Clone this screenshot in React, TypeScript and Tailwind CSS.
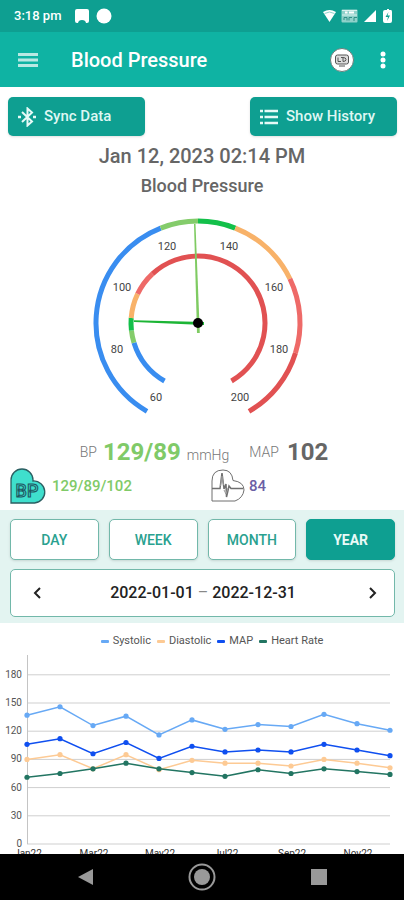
import type { ReactNode } from "react";

type Segment = { from: number; to: number; color: string };

const CENTER = 110;
const OUTER_RADIUS = 102;
const INNER_RADIUS = 67;

const outerSegments: Segment[] = [
  { from: 60, to: 120, color: "#398df0" },
  { from: 120, to: 130, color: "#84cc6b" },
  { from: 130, to: 140, color: "#13c04a" },
  { from: 140, to: 160, color: "#f8b269" },
  { from: 160, to: 180, color: "#ee6a68" },
  { from: 180, to: 200, color: "#e15152" },
];

const innerSegments: Segment[] = [
  { from: 60, to: 80, color: "#398df0" },
  { from: 80, to: 85, color: "#84cc6b" },
  { from: 85, to: 90, color: "#13c04a" },
  { from: 90, to: 100, color: "#f8b269" },
  { from: 100, to: 110, color: "#ee6a68" },
  { from: 110, to: 200, color: "#e15152" },
];

const gaugeLabels = [
  { value: 60, x: 68, y: 188 },
  { value: 80, x: 29, y: 140 },
  { value: 100, x: 34, y: 78 },
  { value: 120, x: 79, y: 37 },
  { value: 140, x: 141, y: 37 },
  { value: 160, x: 186, y: 78 },
  { value: 180, x: 191, y: 140 },
  { value: 200, x: 152, y: 188 },
];

function gaugePoint(value: number, radius: number) {
  const angle = ((value - 130) * (300 / 140) * Math.PI) / 180;
  return {
    x: CENTER + radius * Math.sin(angle),
    y: CENTER - radius * Math.cos(angle),
  };
}

function arcPath({ from, to }: Segment, radius: number) {
  const a = gaugePoint(from, radius);
  const b = gaugePoint(to, radius);
  const large = (to - from) * (300 / 140) > 180 ? 1 : 0;
  return `M${a.x} ${a.y}A${radius} ${radius} 0 ${large} 1 ${b.x} ${b.y}`;
}

function Gauge() {
  return (
    <svg
      viewBox="0 0 220 210"
      className="mr-2 h-[210px] w-[220px]"
      role="img"
      aria-label="Blood pressure gauge, 129 over 89"
    >
      {outerSegments.map((s) => (
        <path key={s.from} d={arcPath(s, OUTER_RADIUS)} fill="none" stroke={s.color} strokeWidth="5" />
      ))}
      {innerSegments.map((s) => (
        <path key={s.from} d={arcPath(s, INNER_RADIUS)} fill="none" stroke={s.color} strokeWidth="5" />
      ))}
      {gaugeLabels.map((l) => (
        <text key={l.value} x={l.x} y={l.y} textAnchor="middle" className="fill-[#444] text-[11px]">
          {l.value}
        </text>
      ))}
      <path d="M106 11H107.500L111.800 120H109Z" fill="#7fcb62" />
      <path d="M46 107.200L116 109V112L46 109Z" fill="#1cb535" />
      <circle cx={CENTER} cy={CENTER} r="5" fill="#000" />
    </svg>
  );
}

const series = [
  { name: "Systolic", color: "#67a9f5", values: [137, 146, 126, 136, 116, 132, 122, 127, 125, 138, 128, 121] },
  { name: "Diastolic", color: "#fdca94", values: [90, 95, 80, 95, 79, 89, 86, 86, 83, 90, 86, 81] },
  { name: "MAP", color: "#0f4ff0", values: [106, 112, 96, 108, 91, 104, 98, 100, 98, 106, 100, 94] },
  { name: "Heart Rate", color: "#227562", values: [71, 75, 80, 86, 80, 76, 72, 79, 75, 80, 77, 74] },
];

const months = ["Jan22", "Mar22", "May22", "Jul22", "Sep22", "Nov22"];
const ticks = [0, 30, 60, 90, 120, 150, 180];
const chartX = (i: number) => 27 + i * 33;
const chartY = (v: number) => 194 - v * 0.94;

function TrendChart() {
  return (
    <svg viewBox="0 0 404 220" className="w-full shrink-0" role="img" aria-label="Readings by month">
      {ticks.map((t) => (
        <g key={t}>
          <line x1="27" x2="390" y1={chartY(t)} y2={chartY(t)} stroke="#cfcfcf" />
          <text x="22" y={chartY(t) + 3} textAnchor="end" className="fill-[#555] text-[10px]">
            {t}
          </text>
        </g>
      ))}
      <line x1="27.500" x2="27.500" y1="5" y2="194" stroke="#c4c4c4" />
      {series.map((s) => (
        <g key={s.name} fill={s.color}>
          <polyline
            points={s.values.map((v, i) => `${chartX(i)},${chartY(v)}`).join(" ")}
            fill="none"
            stroke={s.color}
            strokeWidth="1.500"
          />
          {s.values.map((v, i) => (
            <circle key={i} cx={chartX(i)} cy={chartY(v)} r="2.600" />
          ))}
        </g>
      ))}
      {months.map((m, i) => (
        <text key={m} x={chartX(i * 2) + 1} y="207" textAnchor="middle" className="fill-[#333] text-[10px]">
          {m}
        </text>
      ))}
    </svg>
  );
}

function StatusBar() {
  return (
    <div className="flex h-8 shrink-0 items-center bg-[#0e9f91] pr-3 pl-[14px] text-white">
      <span className="text-[13px] font-medium">3:18 pm</span>
      <svg viewBox="0 0 38 16" className="ml-[14px] h-4 w-[38px]" fill="currentColor" aria-hidden="true">
        <path d="M2 1H12Q14 1 14 3V13Q14 15 12 15H11Q10.500 12 7 12Q3.500 12 3 15H2Q0 15 0 13V3Q0 1 2 1Z" />
        <circle cx="29" cy="8" r="7.500" />
      </svg>
      <svg viewBox="0 0 70 16" className="ml-auto h-4 w-[70px]" aria-hidden="true">
        <path d="M1 4Q7.500 0 14 4L7.500 14Z" fill="#fff" />
        <path d="M2.500 5.500Q7.500 2.500 12.500 5.500" fill="none" stroke="#8fd4cc" />
        <rect x="19.500" y="1.500" width="16" height="13" rx="1" fill="#8fd1ca" />
        <path d="M20 2.500H35M20 7H35" stroke="#d8f1ee" />
        <path d="M23 4.500H25.500M27 4.500H32" stroke="#fff" strokeWidth="2" />
        <path d="M22 12V9.500H25V12.500M27 12.500V9.500H30M32 13V9.500H35" fill="none" stroke="#318f86" />
        <path d="M54 2V14H42Z" fill="#fff" />
        <path d="M63 2H65V1H67V2H69Q70 2 70 4V13Q70 15 68 15H63Q61 15 61 13V4Q61 2 63 2Z" fill="#fff" />
        <path d="M66.500 4L63.500 9H66L65 13L68 7.500H65.500Z" fill="#0e9f91" />
      </svg>
    </div>
  );
}

function AppBar() {
  return (
    <header className="flex h-[55px] shrink-0 items-center bg-[#0fb3a3] px-[18px] text-white">
      <button type="button" aria-label="Menu">
        <svg viewBox="0 0 20 16" className="h-4 w-5" stroke="#b9e9e3" strokeWidth="3" aria-hidden="true">
          <path d="M0 2.500H20M0 8H20M0 13.500H20" />
        </svg>
      </button>
      <h1 className="ml-[33px] text-xl font-medium">Blood Pressure</h1>
      <button type="button" aria-label="Remove ads" className="ml-auto">
        <svg viewBox="0 0 24 24" className="size-6" aria-hidden="true">
          <circle cx="12" cy="12" r="11.500" fill="#fff" stroke="#6b7c79" />
          <rect x="5.500" y="7" width="13" height="9" rx="2" fill="#ddd" stroke="#555" />
          <path d="M8 9.500V13.500H11M11 9.500H13V13.500M13 9.500Q16 9.500 16 11.500T13 13.500M9 18H15" fill="none" stroke="#555" />
        </svg>
      </button>
      <button type="button" aria-label="More options" className="ml-[26px]">
        <svg viewBox="0 0 6 18" className="h-[18px] w-[6px]" fill="currentColor" aria-hidden="true">
          <circle cx="3" cy="3" r="2.500" />
          <circle cx="3" cy="9" r="2.500" />
          <circle cx="3" cy="15" r="2.500" />
        </svg>
      </button>
    </header>
  );
}

function ActionButton({ icon, label, className }: { icon: ReactNode; label: string; className: string }) {
  return (
    <button
      type="button"
      className={`flex h-[39px] items-center gap-2 rounded-[5px] bg-[#0e9f91] pl-[10px] text-[15px] font-medium text-[#dff7f3] shadow-sm ${className}`}
    >
      {icon}
      {label}
    </button>
  );
}

function HeartBp() {
  return (
    <svg viewBox="0 0 36 36" className="size-9" aria-hidden="true">
      <path
        d="M1 35V12A11 11 0 0 1 23 12V13A11 11 0 0 1 24.500 35Z"
        fill="#3fdfcd"
        stroke="#2b5f62"
        strokeWidth="1.300"
      />
      <text x="17" y="29" textAnchor="middle" className="fill-[#35c9bd] text-[18px] font-medium" stroke="#215560">
        BP
      </text>
    </svg>
  );
}

function HeartPulse() {
  return (
    <svg viewBox="0 0 34 34" className="h-[34px] w-[34px]" fill="none" stroke="#6f6f6f" aria-hidden="true">
      <path d="M1 32V12Q1 1 12 1Q21 1 22 11.500Q33 13 33 21Q32 29 24 32Z" />
      <path d="M1 19.500H9L11 4L13 20L15 15L15.500 28L18 17L20 19.500H32" strokeWidth="1.500" />
      <path d="M9.500 17L11 7L12.500 16M13 21L15 25L17 19" stroke="#999" />
    </svg>
  );
}

const periods = ["DAY", "WEEK", "MONTH", "YEAR"];

function PeriodPanel() {
  return (
    <section className="flex flex-col gap-[9px] bg-[#e3f4f1] pt-[9px] pr-[9px] pb-[6px] pl-[10px]">
      <div className="grid grid-cols-4 gap-[10px]">
        {periods.map((p) => (
          <button
            key={p}
            type="button"
            aria-pressed={p === "YEAR"}
            className={`h-[41px] rounded-[5px] border text-sm shadow-sm ${
              p === "YEAR"
                ? "border-[#0e9f91] bg-[#0e9f91] font-bold text-[#e8faf7]"
                : "border-[#72b8aa] bg-white font-medium text-[#2aa18f]"
            }`}
          >
            {p}
          </button>
        ))}
      </div>
      <div className="flex h-12 items-center justify-between rounded-[5px] border border-[#72b8aa] bg-white pr-[17px] pl-[22px]">
        <button type="button" aria-label="Previous year">
          <svg viewBox="0 0 8 12" className="h-3 w-2" fill="none" stroke="#222" strokeWidth="2" aria-hidden="true">
            <path d="M7 1L2 6L7 11" />
          </svg>
        </button>
        <span className="pr-1 text-base font-medium text-[#222]">
          2022-01-01 <span className="font-normal text-[#888]">–</span> 2022-12-31
        </span>
        <button type="button" aria-label="Next year">
          <svg viewBox="0 0 8 12" className="h-3 w-2" fill="none" stroke="#222" strokeWidth="2" aria-hidden="true">
            <path d="M1 1L6 6L1 11" />
          </svg>
        </button>
      </div>
    </section>
  );
}

function NavigationBar() {
  return (
    <nav className="flex h-[46px] shrink-0 items-center justify-center gap-[95px] bg-black">
      <button type="button" aria-label="Back">
        <svg viewBox="0 0 15 18" className="h-[18px] w-[15px]" fill="#999" aria-hidden="true">
          <path d="M15 1V17L0 9Z" />
        </svg>
      </button>
      <button type="button" aria-label="Home">
        <svg viewBox="0 0 28 28" className="size-7" aria-hidden="true">
          <circle cx="14" cy="14" r="12.500" fill="none" stroke="#999" strokeWidth="2" />
          <circle cx="14" cy="14" r="8" fill="#999" />
        </svg>
      </button>
      <button type="button" aria-label="Recent apps" className="size-4 bg-[#999]" />
    </nav>
  );
}

export default function App() {
  return (
    <div className="flex h-screen flex-col bg-white font-[Roboto,sans-serif]">
      <StatusBar />
      <AppBar />
      <main className="flex min-h-0 flex-1 flex-col overflow-hidden">
        <div className="flex shrink-0 justify-between pt-[10px] pr-[7px] pl-2">
          <ActionButton
            label="Sync Data"
            className="w-[137px]"
            icon={
              <svg viewBox="0 0 18 20" className="h-5 w-[18px]" fill="none" stroke="#e6faf7" strokeWidth="2" aria-hidden="true">
                <path d="M4 5L14 14.500L9.500 18.500V1.500L14 5.500L4 15" />
                <path d="M0 10H3M15 10H18" strokeWidth="2.500" />
              </svg>
            }
          />
          <ActionButton
            label="Show History"
            className="w-[147px]"
            icon={
              <svg viewBox="0 0 18 16" className="h-4 w-[18px]" stroke="#e6faf7" strokeWidth="2.400" aria-hidden="true">
                <path d="M0 2H3M4.500 2H18M0 8H3M4.500 8H18M0 14H3M4.500 14H18" />
              </svg>
            }
          />
        </div>

        <section className="flex shrink-0 flex-col items-center text-[#666]">
          <h2 className="mt-[6px] text-xl leading-7 font-medium">Jan 12, 2023 02:14 PM</h2>
          <h3 className="mt-1 text-lg leading-6 font-medium">Blood Pressure</h3>
          <div className="mt-[15px]">
            <Gauge />
          </div>
        </section>

        <section className="shrink-0">
          <div className="mt-[13px] flex h-8 items-baseline justify-center pl-1 text-[#777]">
            <span className="self-center text-sm font-light">BP</span>
            <span className="ml-[6px] text-2xl leading-8 font-bold text-[#80ca68]">129/89</span>
            <span className="ml-[6px] text-sm leading-8 font-light">mmHg</span>
            <span className="ml-5 self-center text-sm font-light">MAP</span>
            <span className="ml-2 text-2xl leading-8 font-bold text-[#666]">102</span>
          </div>
          <div className="grid h-9 grid-cols-2 items-center px-[10px]">
            <div className="flex items-center gap-[6px] text-[15px] font-medium text-[#80ca68]">
              <HeartBp />
              129/89/102
            </div>
            <div className="flex items-center gap-1 pl-[9px] text-[15px] font-medium text-[#6b5fa5]">
              <HeartPulse />
              84
            </div>
          </div>
        </section>

        <div className="mt-[6px] shrink-0">
          <PeriodPanel />
        </div>

        <section className="flex shrink-0 flex-col gap-px pt-[10px]">
          <ul className="flex h-4 items-center justify-center gap-[6px] pl-5 text-[11px] text-[#555]">
            {series.map((s) => (
              <li key={s.name} className="flex items-center gap-1">
                <svg viewBox="0 0 8 3" className="h-[3px] w-2" aria-hidden="true">
                  <rect width="8" height="3" rx="1" fill={s.color} />
                </svg>
                {s.name}
              </li>
            ))}
          </ul>
          <TrendChart />
        </section>
      </main>
      <NavigationBar />
    </div>
  );
}
